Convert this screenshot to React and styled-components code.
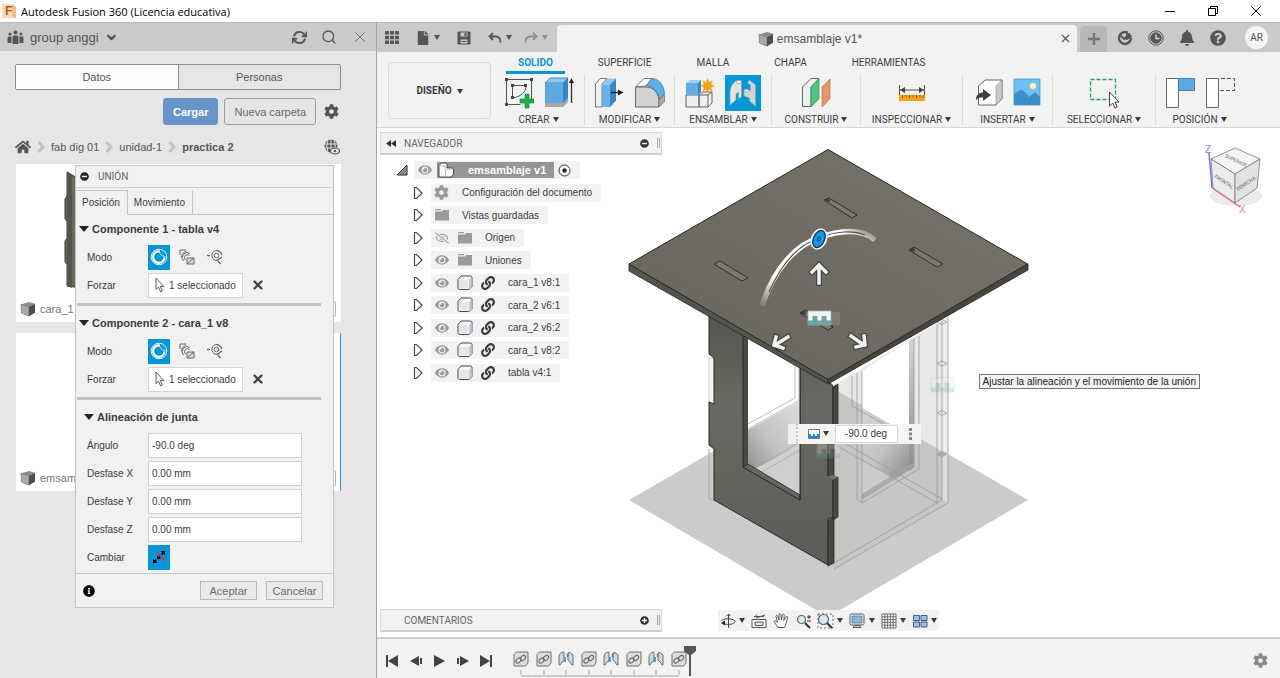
import React from "react";
import styled, { createGlobalStyle } from "styled-components";
import {
  FaFile,
  FaBell,
  FaQuestionCircle,
  FaCog,
  FaHome,
  FaEye,
  FaRegEyeSlash,
  FaLink,
  FaInfoCircle,
  FaMinusCircle,
  FaPlusCircle,
} from "react-icons/fa";
import { FiRefreshCw, FiSearch, FiX, FiChevronDown } from "react-icons/fi";

const GlobalStyle = createGlobalStyle`
  * {
    box-sizing: border-box;
  }
  body {
    margin: 0;
    font-family: "Liberation Sans", Arial, sans-serif;
    font-size: 10px;
    color: #3c3c3c;
    background: #fff;
  }
  button, input {
    font: inherit;
    color: inherit;
    margin: 0;
    padding: 0;
    border: 0;
    background: none;
  }
  svg {
    display: block;
    flex-shrink: 0;
  }
`;

/* ---------- small drawings ---------- */

const Cube = ({ size = 16 }) => (
  <svg width={size} height={size} viewBox="0 0 16 16">
    <path d="M1 3.5 9 1l6 1.8-6 3z" fill="#8b8b8b" />
    <path d="M1 3.5l8 2.3v9.4L1.5 12z" fill="#a9a9a9" stroke="#666" strokeWidth=".6" />
    <path d="M9 5.8l6-3v9L9 15.2z" fill="#4e4e4e" />
  </svg>
);

const Body = () => (
  <svg width="16" height="16" viewBox="0 0 16 16">
    <path
      d="M1 4.5 4 1h9.5L15 2v9.5l-3 3H2.5L1 13.5z"
      fill="#f6f7fa"
      stroke="#4c4c4c"
      strokeLinejoin="round"
    />
    <path d="M2 5h9.5v8.5H2z" fill="#e4e6ec" />
    <path d="M12 5l2.5-3v9.5L12 14z" fill="#c6c9d2" />
  </svg>
);

const Assembly = () => (
  <svg width="16" height="16" viewBox="0 0 16 16">
    <path d="M1 3.5 3.5 1H8l1 1.5V6h5.5l1 1v5l-2.5 3H2l-1-1z" fill="#fff" stroke="#4c4c4c" />
    <path d="M7.5 9 9 7h5M7.5 9v5.5M2 4h5v4" fill="none" stroke="#b9bcc6" />
  </svg>
);

const Folder = () => (
  <svg width="16" height="14" viewBox="0 0 16 14">
    <path d="M1 1h6v1.3H1zM1 3.5h7L9 2h6v10.5H1z" fill="#9b9b9b" />
  </svg>
);

const Expand = () => (
  <svg width="10" height="14" viewBox="0 0 10 14">
    <path d="M1.5 1.5h2L9 7l-5.5 5.5h-2z" fill="#fff" stroke="#4a4a4a" strokeWidth="1.2" />
  </svg>
);

const Expanded = () => (
  <svg width="12" height="12" viewBox="0 0 12 12">
    <path d="M1 11 11 1v10z" fill="#8b8b8b" stroke="#2f2f2f" />
  </svg>
);

const Cursor = () => (
  <svg width="10" height="16" viewBox="0 0 10 16">
    <path
      d="M1 1v11.5l2.6-2.3 2 4.6 1.8-.8-2-4.4H9z"
      fill="#f4f8ff"
      stroke="#4b5058"
      strokeWidth=".9"
    />
  </svg>
);

const RingIcon = () => (
  <svg width="18" height="18" viewBox="0 0 18 18" fill="none" stroke="#fff">
    <circle cx="9" cy="9" r="7.8" strokeWidth=".9" />
    <path d="M9.5 3.5A5.7 5.7 0 1 0 14.5 9.5" strokeWidth="2.2" />
    <path d="M9.5 2.5c0 3.500 2 5.500 6 6" strokeWidth=".8" />
  </svg>
);

const BetweenIcon = () => (
  <svg width="16" height="16" viewBox="0 0 16 16" fill="none" stroke="#666">
    <path d="M1 6V1h6" />
    <path d="M11 4.5a5 5 0 0 0-6.5 7.5M10.5 6.5A3 3 0 0 0 6.5 11M7 2.5a6 6 0 0 0-4.5 6" />
    <path d="M8 9h7v6H8z" fill="#ddd" />
    <path d="M8.5 14.5 15 9" />
  </svg>
);

const OriginIcon = () => (
  <svg width="18" height="16" viewBox="0 0 18 16" fill="none" stroke="#666">
    <path d="M1 6.5h3" strokeWidth="1.4" />
    <path d="M15.8 5.5A5 5 0 1 0 12 11.3M10 1.5c3 .2 5 2 5.5 4.5" />
    <circle cx="10.5" cy="6.5" r="2.3" />
    <path d="M11 11.5 16 8M12 12l2.5 3" strokeWidth="1.3" />
  </svg>
);

const FlipIcon = () => (
  <svg width="14" height="14" viewBox="0 0 14 14">
    <path
      d="M1 13V8.5l1.700 1.700L4 9l1 1-1.200 1.300L5.500 13zM13 1v4.500l-1.700-1.700L10 5 9 4l1.200-1.300L8.500 1zM5 5.500v3.500h4L7.800 7.800 9 6.500 8 5.500 6.500 6.800z"
      fill="#000"
    />
    <path d="M4 1.5 13 11" stroke="#f01f3a" strokeWidth="1.300" />
  </svg>
);

const Team = () => (
  <svg width="17" height="15" viewBox="0 0 17 15" fill="currentColor">
    <circle cx="8.5" cy="2.5" r="2" />
    <circle cx="3" cy="4" r="1.600" />
    <circle cx="14" cy="4" r="1.600" />
    <path d="M6.500 5.500h4l1 1V14h-6V6.500zM1.500 6.500h3V13h-4V7.500zM12.500 6.500h3l1 1V13h-4z" />
  </svg>
);

const Save = () => (
  <svg width="14" height="14" viewBox="0 0 14 14">
    <path d="M.5 1.5 1.5.5h11l1 1v11l-1 1h-11l-1-1z" fill="currentColor" />
    <path d="M3.5 1.5h7v4h-7zM3.5 8.5h7v4h-7z" fill="#cacaca" />
    <path d="M7.5 2h2v3h-2zM4.5 10h5v1h-5z" fill="currentColor" />
  </svg>
);

const SharedGlobe = () => (
  <svg width="16" height="16" viewBox="0 0 16 16" fill="none">
    <circle cx="7" cy="7" r="6.5" fill="#555" />
    <path
      d="M0 5h14M0 9h14M7 0v14M4 1.5c-1.5 4-1.5 7 0 11M10 1.5c1.5 4 1.5 7 0 11"
      stroke="#e6e6e6"
    />
    <ellipse cx="11" cy="12" rx="4.5" ry="3" fill="#e6e6e6" stroke="#555" strokeWidth="1.2" />
    <circle cx="11" cy="12" r="1.3" fill="#555" />
  </svg>
);

const Undo = ({ flip }) => (
  <svg width="14" height="14" viewBox="0 0 14 14" fill="none" stroke="currentColor" strokeWidth="1.8">
    <g transform={flip ? "matrix(-1 0 0 1 14 0)" : undefined}>
      <path d="M5 2 1.5 5.5 5 9" />
      <path d="M2 5.5h5.5c3.5 0 5 2.5 5 6" />
    </g>
  </svg>
);

const Apps = () => (
  <svg width="14" height="13" viewBox="0 0 14 13" fill="currentColor">
    <path d="M0 0h4v3.500H0zM5 0h4v3.500H5zM10 0h4v3.500h-4zM0 4.800h4v3.500H0zM5 4.800h4v3.500H5zM10 4.800h4v3.500h-4zM0 9.500h4V13H0zM5 9.500h4V13H5zM10 9.500h4V13h-4z" />
  </svg>
);

const JobStatus = () => (
  <svg width="16" height="16" viewBox="0 0 16 16" fill="none" stroke="currentColor">
    <path d="M10.5 2.5A6 6 0 1 0 14 8" strokeWidth="2.4" />
    <path d="M3.5 5.5 7 9l6-5.5M10 1.5V5l4.5 1.5" strokeWidth="1.8" />
    <path d="M7 9l5-6 3 4-5 3z" fill="currentColor" stroke="none" />
  </svg>
);

const Clock = () => (
  <svg width="16" height="16" viewBox="0 0 16 16" fill="none" stroke="currentColor">
    <circle cx="8" cy="8" r="7.2" />
    <circle cx="8" cy="8" r="5.2" fill="currentColor" />
    <path d="M8 4.5v4h3.5" stroke="#d8d8d8" strokeWidth="1.4" />
  </svg>
);

const SketchIcon = () => (
  <svg width="30" height="32" viewBox="0 0 30 32" fill="none">
    <path d="M2.5 2.5h25v20M2.5 2.5v25h14" stroke="#555" />
    <path d="M8.5 8.5H22c0 6-4 11-13.5 12.5z" stroke="#555" />
    <path
      d="M1 1h3v3H1zM26 1h3v3h-3zM1 26h3v3H1zM7 7h3v3H7zM20 7h3v3h-3zM7 19h3v3H7z"
      fill="#444"
    />
    <path d="M21 17h4v5h5v4h-5v5h-4v-5h-5v-4h5z" fill="#20b04b" stroke="#12843a" strokeWidth=".6" />
  </svg>
);

const ExtrudeIcon = () => (
  <svg width="30" height="32" viewBox="0 0 30 32">
    <path d="M1 25h18l5-5v5l-5 5H1z" fill="#a7a7a7" />
    <path d="M1 6 6 1h18l-5 5z" fill="#8cc8f2" stroke="#2f78b0" strokeWidth=".8" />
    <path d="M1 6h18v20H1z" fill="#5fa9e2" />
    <path d="M19 6l5-5v20l-5 5z" fill="#3985c2" />
    <path d="M27.5 26V4" stroke="#333" strokeWidth="1.3" />
    <path d="M25 6l2.5-5L30 6z" fill="#222" />
  </svg>
);

const PressPullIcon = () => (
  <svg width="30" height="32" viewBox="0 0 30 32">
    <path d="M1.5 7 6 1.5h7L8 7v23H1.5z" fill="#f2f2f2" stroke="#777" />
    <path d="M8 8l6-6.500h8L17 8z" fill="#8cc8f2" />
    <path d="M8 8h8.5v22H8z" fill="#68b0e6" />
    <path d="M16 8l6-6.500v22L16 30z" fill="#3a86c4" />
    <path d="M17 15.5h8" stroke="#222" strokeWidth="1.5" />
    <path d="M24 12.5l5.5 3-5.5 3z" fill="#222" />
  </svg>
);

const FilletIcon = () => (
  <svg width="32" height="32" viewBox="0 0 32 32">
    <path d="M1.5 10 10 1.5h8L12 9z" fill="#fff" stroke="#777" />
    <path d="M1.5 10H12c7 0 12 5 13 13v7H1.5z" fill="#d2d2d2" stroke="#666" />
    <path
      d="M12 9l6-7.500C25 2 30 8 30.500 17L25 22c-.5-7-5-12.500-13-13z"
      fill="#5fb0e8"
      stroke="#33719e"
      strokeWidth=".7"
    />
    <path d="M25 23l5.5-5.500v7L25 30z" fill="#a9a9a9" stroke="#666" strokeWidth=".7" />
  </svg>
);

const NewComponentIcon = () => (
  <svg width="30" height="32" viewBox="0 0 30 32">
    <path d="M1 18h13v12H1zM14 18l4-3h9v11l-4 4h-9z" fill="#eee" stroke="#666" />
    <path d="M14 18h9v12M23 18l4-3" fill="none" stroke="#666" />
    <path d="M1 6l4-3h11l-3 3z" fill="#9ad0f5" />
    <path d="M1 6h12v12H1z" fill="#62ace4" />
    <path d="M13 6l3-3v12l-3 3z" fill="#3985c2" />
    <path
      d="M22.5 1l1.5 4.200 4-1.900-1.900 4L30 9l-3.900 1.500 1.900 4-4-1.900-1.500 4.400-1.500-4.400-4 1.900 1.900-4L15 9l3.900-1.700-1.900-4 4 1.900z"
      fill="#f6a212"
    />
  </svg>
);

const JointIcon = () => (
  <svg width="28" height="28" viewBox="0 0 28 28">
    <path d="M1 12C2 6 5 3 8 1.500h4.500V18l-3 1.500V13L7 15v6l-6 5z" fill="#e4e4e4" stroke="#8aa" strokeWidth=".7" />
    <ellipse cx="10" cy="3" rx="2.700" ry="1.700" fill="#fff" stroke="#888" strokeWidth=".6" />
    <path d="M15 11h4.500v1l2-1V6l-3-2 2-3 6 5v21l-6-5v-3l-5.500-2z" fill="#d3d3d3" stroke="#8aa" strokeWidth=".7" />
    <ellipse cx="17.500" cy="11.500" rx="2.500" ry="1.500" fill="#fff" stroke="#888" strokeWidth=".6" />
  </svg>
);

const PlaneIcon = () => (
  <svg width="30" height="32" viewBox="0 0 30 32">
    <path d="M1.5 10 10 1.5h8L10 10v19.500H1.5z" fill="#eee" stroke="#666" />
    <path d="M10 10l8-8v20l-8 8z" fill="#50c281" stroke="#23894f" strokeWidth=".6" />
    <path d="M21 10l8-8v20l-8 8z" fill="#e5966a" stroke="#b9683a" strokeWidth=".6" />
  </svg>
);

const MeasureIcon = () => (
  <svg width="28" height="32" viewBox="0 0 28 32">
    <path d="M1.5 8v11M26.5 8v11M2 13h24" stroke="#555" />
    <path d="M2 13l5-3v6zM26 13l-5-3v6z" fill="#444" />
    <path d="M1 18h26v6H1z" fill="#f5a30f" />
    <path d="M4.5 18v3M8 18v2M11.5 18v3M15 18v2M18.5 18v3M22 18v2M25 18v3" stroke="#8a5600" />
  </svg>
);

const InsertIcon = () => (
  <svg width="28" height="32" viewBox="0 0 28 32">
    <path d="M3.5 9 10 3h17v19l-6 6H3.5z" fill="#fff" stroke="#666" />
    <path d="M21 9l6-6v19l-6 6z" fill="#c9c9c9" stroke="#888" strokeWidth=".6" />
    <path d="M1 23c0-5 3-7.500 7-7.500V12l8 6-8 6v-3.500c-3 0-5 .5-7 2.500z" fill="#3d3f42" />
  </svg>
);

const CanvasIcon = () => (
  <svg width="28" height="32" viewBox="0 0 28 32">
    <path d="M1 2h26v26H1z" fill="#6fc1f5" />
    <path d="M1 17l6-4c2-1 4 1 9 7l5-4c1-.5 2 0 6 4v8H1z" fill="#3a8fc9" />
    <circle cx="20" cy="9" r="3" fill="#fff6cf" stroke="#f1e08a" />
    <path d="M1 2h26v26H1z" fill="none" stroke="#3a8fc9" strokeWidth=".7" />
  </svg>
);

const SelectIcon = () => (
  <svg width="30" height="32" viewBox="0 0 30 32">
    <path d="M1.5 2.5h25v20h-25z" fill="none" stroke="#20a551" strokeWidth="1.3" strokeDasharray="4 2" />
    <path d="M20.5 15v14l3.200-3 2.300 5 2.200-1-2.300-5h4z" fill="#fff" stroke="#444" />
  </svg>
);

const PositionIcon = ({ filled }) => (
  <svg width="30" height="32" viewBox="0 0 30 32">
    <path d="M1.5 1.5h12v29h-12z" fill="#fff" stroke="#666" />
    {filled ? (
      <path d="M13.5 1.5h16v12h-16z" fill="#5fa9e2" stroke="#33719e" strokeWidth=".8" />
    ) : (
      <path d="M16 1.5h13.5v12H14" fill="none" stroke="#555" strokeDasharray="4 2" />
    )}
  </svg>
);

const Orbit = () => (
  <svg width="16" height="16" viewBox="0 0 16 16" fill="none" stroke="#444">
    <path d="M8.5 1v14M6.5 3l2-2 2 2" />
    <path d="M3.500 10.500C8 12.500 15 11 15 8.500S6 4.500 1.500 7.500" />
    <path d="M1 10l4-2.500v5z" fill="#222" stroke="none" />
  </svg>
);

const LookAt = () => (
  <svg width="16" height="16" viewBox="0 0 16 16" fill="none" stroke="#4b5560">
    <path d="M1 6.5h14v8H1z" fill="#fff" />
    <path d="M4 9h8v3.5H4z" fill="#dfe6ee" />
    <path d="M3 4.5l3-3M5 5l9-3M3 3.5h10" />
  </svg>
);

const Pan = () => (
  <svg width="16" height="16" viewBox="0 0 16 16">
    <path
      d="M5 14.500C3.500 12 1.500 9.500 1 8.500c0-1 1.500-1 3.500 1L3 3.500c0-1.500 1.300-1.500 1.800 0L6 7 6 2c0-1.500 1.800-1.500 1.900 0L8.300 7 9.500 2c.3-1.300 2-1 1.800.5L10.700 7.500 13 4c.8-1.200 2-.5 1.600.8C13 9 13 12 11.500 14.500z"
      fill="#fff"
      stroke="#4b4b4b"
      strokeWidth=".9"
    />
  </svg>
);

const Zoom = ({ box }) => (
  <svg width="17" height="16" viewBox="0 0 17 16" fill="none">
    {box && <path d="M1 1h15v14H1z" stroke="#777" strokeDasharray="2 2" />}
    <circle cx="6.5" cy="6.5" r={box ? 5 : 4} fill="#d8ecf2" stroke="#5d6a73" strokeWidth="1.2" />
    <path d="M10 10l5 5" stroke="#333" strokeWidth="2" />
    {!box && <path d="M12 4h4M14 2v4M12 8h4" stroke="#333" />}
  </svg>
);

const Display = () => (
  <svg width="17" height="16" viewBox="0 0 17 16">
    <rect x="1" y="1" width="14" height="11" rx="1.5" fill="#f1f1f1" stroke="#4d5966" />
    <path d="M3 3h10v7H3z" fill="#8fb4dc" stroke="#4d6a8b" strokeWidth=".7" />
    <path d="M4 14.500h8l-1.500-2h-5z" fill="#ddd" stroke="#4d5966" />
  </svg>
);

const GridIcon = () => (
  <svg width="16" height="16" viewBox="0 0 16 16">
    <path
      d="M1 1h14v14H1zM3.800 1v14M6.600 1v14M9.400 1v14M12.200 1v14M1 3.800h14M1 6.600h14M1 9.400h14M1 12.200h14"
      fill="#fff"
      stroke="#6d6d6d"
    />
  </svg>
);

const Viewports = () => (
  <svg width="16" height="16" viewBox="0 0 16 16">
    <path
      d="M1.5 2.5h6v5h-6zM9 2.5h6v5H9zM1.5 9h6v5h-6zM9 9h6v5H9z"
      fill="#9dbfe3"
      stroke="#42618a"
    />
  </svg>
);

const LinkStep = () => (
  <svg width="16" height="16" viewBox="0 0 16 16">
    <path d="M1 3.5 3.5 1H15v11l-2.5 3H1z" fill="#dedede" stroke="#6f6f6f" />
    <g fill="none" stroke="#666">
      <ellipse cx="5.500" cy="9.500" rx="3" ry="2" transform="rotate(-40 5.500 9.500)" />
      <ellipse cx="10" cy="7" rx="3" ry="2" transform="rotate(-40 10 7)" />
    </g>
  </svg>
);

const JointStep = () => (
  <svg width="16" height="16" viewBox="0 0 16 16">
    <path d="M1 6C1 3 3 1 6 1v9l-2 1-2 3H1z" fill="#d6d6d6" stroke="#6f6f6f" />
    <path d="M15 14V4l-4-3-1 3v5l2 2 2 3z" fill="#d6d6d6" stroke="#6f6f6f" />
    <path d="M7 11V6M9.500 6V2.500" stroke="#1c87c9" strokeWidth="1.4" fill="none" />
  </svg>
);

const Caret = styled.span`
  display: inline-block;
  border: 3px solid transparent;
  border-top: 5px solid currentColor;
  border-bottom: 0;
`;

/* ---------- window frame ---------- */

const Shell = styled.div`
  display: flex;
  flex-direction: column;
  height: 100vh;
  overflow: hidden;
`;

const TitleBar = styled.header`
  display: flex;
  align-items: center;
  height: 22px;
  padding: 0 18px 0 2px;
  color: #000;
  font-family: "Open Sans", sans-serif;
  font-size: 11px;
`;

const AppTitle = styled.span`
  flex: 1;
  margin-left: 5px;
`;

const WindowButtons = styled.div`
  display: flex;
  gap: 31px;
`;

const Main = styled.div`
  display: flex;
  flex: 1;
  min-height: 0;
`;

/* ---------- data panel ---------- */

const Panel = styled.aside`
  position: relative;
  flex: 0 0 377px;
  background: #e6e6e6;
  border-right: 1px solid #a5a5a5;
  color: #555;
  font-size: 11px;
`;

const PanelHead = styled.div`
  display: flex;
  align-items: center;
  height: 29px;
  padding: 0 7px;
  background: #cacaca;
  border-top: 1px solid #bdbdbd;
`;

const TeamButton = styled.button`
  display: flex;
  align-items: center;
  gap: 6px;
  flex: 1;
  font-size: 13px;
`;

const HeadActions = styled.div`
  display: flex;
  gap: 14px;
`;

const PanelBody = styled.div`
  padding: 13px 35px 0 15px;
`;

const Segments = styled.div`
  display: flex;
  height: 26px;
  border: 1px solid #8d8d8d;
  border-radius: 2px;
`;

const Segment = styled.button`
  flex: 1;
  background: ${(p) => (p.$active ? "#fcfcfc" : "transparent")};

  & + & {
    border-left: 1px solid #8d8d8d;
  }
`;

const Actions = styled.div`
  display: flex;
  align-items: center;
  justify-content: flex-end;
  gap: 6px;
  margin-top: 8px;

  svg {
    margin: 0 2px;
  }
`;

const ActionButton = styled.button`
  height: 27px;
  padding: 0 9px;
  border: 1px solid ${(p) => (p.$primary ? "#6795c9" : "#9b9b9b")};
  border-radius: 3px;
  background: ${(p) => (p.$primary ? "#6795c9" : "transparent")};
  color: ${(p) => (p.$primary ? "#fff" : "#666")};
  font-weight: ${(p) => (p.$primary ? "bold" : "normal")};
`;

const Crumbs = styled.nav`
  display: flex;
  align-items: center;
  gap: 6px;
  height: 20px;
  margin: 12px 1px 7px 0;

  a {
    color: inherit;
    text-decoration: none;
  }
  a[aria-current] {
    font-weight: bold;
    flex: 1;
  }
`;

const CrumbArrow = () => (
  <svg width="8" height="12" viewBox="0 0 8 12">
    <path d="M1.5 1l4.5 5-4.5 5" fill="none" stroke="#c2c2c2" strokeWidth="3" />
  </svg>
);

const Card = styled.article`
  display: flex;
  flex-direction: column;
  justify-content: space-between;
  height: 158px;
  margin: 0 0 11px 1px;
  background: #fff;
  border-right: 1px solid ${(p) => (p.$selected ? "#3f87d8" : "#fff")};
`;

const Thumb = styled.div`
  height: 130px;
  padding: 7px 0 0 48px;
`;

const CardFooter = styled.div`
  display: flex;
  align-items: center;
  gap: 4px;
  height: 27px;
  padding: 0 4px;
  color: #777;

  button {
    margin-left: auto;
    width: 14px;
    height: 16px;
    border: 1px solid #b5b5b5;
    border-radius: 2px;
  }
`;

/* ---------- joint dialog ---------- */

const Dialog = styled.section`
  position: absolute;
  top: 143px;
  left: 75px;
  width: 259px;
  border: 1px solid #c4c4c4;
  background: #f1f1f1;
  color: #3c3c3c;
  font-size: 10px;
`;

const DialogHead = styled.div`
  display: flex;
  align-items: center;
  gap: 9px;
  height: 22px;
  padding-left: 4px;
  border-bottom: 1px solid #d0d0d0;
  font-family: Roboto, sans-serif;
  color: #666;

  svg {
    color: #222;
  }
`;

const DialogTabs = styled.div`
  display: flex;
  height: 27px;
  padding-top: 2px;
  border-bottom: 1px solid #c2c2c2;
`;

const DialogTab = styled.button`
  height: ${(p) => (p.$active ? "25px" : "24px")};
  padding: 0 7px 1px 6px;
  border: 1px solid ${(p) => (p.$active ? "#c2c2c2" : "transparent")};
  border-right-color: #c2c2c2;
  border-bottom: 0;
  border-left: 0;
  background: #f1f1f1;
`;

const Group = styled.div`
  padding-left: 3px;
`;

const GroupTitle = styled.button`
  display: flex;
  align-items: center;
  gap: 3px;
  height: 28px;
  padding-left: ${(p) => (p.$indent ? "5px" : "0")};
  font-size: 11px;
  font-weight: bold;
`;

const TitleCaret = styled.span`
  border: 5px solid transparent;
  border-top: 6px solid #222;
  border-bottom: 0;
`;

const Field = styled.div`
  display: grid;
  grid-template-columns: 61px 1fr;
  align-items: center;
  height: 28px;
  margin-left: 8px;
`;

const FieldControl = styled.div`
  display: flex;
  align-items: center;
  gap: 6px;
`;

const ToolToggle = styled.button`
  display: flex;
  align-items: center;
  justify-content: center;
  width: 22px;
  height: 25px;
  background: ${(p) => (p.$active ? "#0696d7" : "transparent")};
`;

const Picked = styled.button`
  display: flex;
  align-items: center;
  gap: 4px;
  width: 95px;
  height: 25px;
  padding-left: 6px;
  border: 1px solid #d6d6d6;
  background: #fff;
  white-space: nowrap;
`;

const ClearButton = styled.button`
  margin-left: 2px;
  color: #444;

  svg {
    stroke-width: 4;
  }
`;

const NumberInput = styled.input`
  width: 154px;
  height: 25px;
  padding: 0 3px;
  border: 1px solid #cfcfcf;
  background: #fff;
`;

const Divider = styled.hr`
  height: 3px;
  margin: 4px 12px 3px 1px;
  border: 0;
  background: #c3c3c3;
`;

const DialogFooter = styled.div`
  display: flex;
  align-items: center;
  gap: 9px;
  height: 34px;
  margin-top: 2px;
  padding: 0 10px 0 7px;
  border-top: 1px solid #c8c8c8;

  svg {
    margin-right: auto;
    color: #000;
  }
`;

const DialogButton = styled.button`
  height: 19px;
  padding: 0 4px;
  min-width: 57px;
  border: 1px solid #b9b9b9;
  background: #e9e9e9;
  color: #6b6b6b;
  font-size: 11px;
`;

/* ---------- workspace ---------- */

const Workspace = styled.main`
  display: flex;
  flex-direction: column;
  flex: 1;
  min-width: 0;
`;

const TabStrip = styled.div`
  display: flex;
  align-items: flex-end;
  height: 30px;
  background: #cacaca;
  border-top: 1px solid #bdbdbd;
  color: #555;
`;

const QuickBar = styled.div`
  display: flex;
  align-items: center;
  align-self: stretch;
  width: 180px;
  padding-left: 8px;
`;

const QuickButton = styled.button`
  display: flex;
  align-items: center;
  gap: 4px;
  margin-right: ${(p) => p.$gap}px;
  opacity: ${(p) => (p.disabled ? 0.5 : 1)};
`;

const DocTab = styled.div`
  display: flex;
  align-items: center;
  justify-content: center;
  flex: 1;
  height: 27px;
  padding-right: 5px;
  border-radius: 4px 4px 0 0;
  background: #f2f2f2;
  font-size: 12px;

  span {
    margin-left: auto;
    padding-left: 4px;
    display: flex;
    align-items: center;
    gap: 3px;
  }
  button {
    margin-left: auto;
  }
`;

const NewTab = styled.button`
  display: flex;
  align-items: center;
  justify-content: center;
  width: 27px;
  height: 26px;
  margin: 0 10px 0 3px;
  border-radius: 4px 4px 0 0;
  background: #b8b8b8;
  color: #777;
`;

const StripIcons = styled.div`
  display: flex;
  align-items: center;
  align-self: stretch;
  gap: 15px;
  padding-right: 12px;
`;

const Avatar = styled.button`
  width: 23px;
  height: 23px;
  margin-left: 4px;
  border-radius: 50%;
  background: #f4f4f4;
  font-family: Roboto, sans-serif;
`;

const Ribbon = styled.div`
  display: flex;
  height: 76px;
  padding-left: 11px;
  background: #f2f2f2;
  border-bottom: 1px solid #d9d9d9;
  color: #3c3c3c;
  font-family: Roboto, sans-serif;
`;

const WorkspaceButton = styled.button`
  width: 103px;
  height: 57px;
  margin: 10px 2px 0 0;
  border: 1px solid #dadada;
  border-radius: 4px;
  font-weight: bold;

  ${Caret} {
    margin-left: 5px;
    vertical-align: middle;
  }
`;

const RibbonTabs = styled.div`
  display: flex;
  gap: 21px;
  height: 22px;
  padding-left: 13px;
`;

const RibbonTab = styled.button`
  padding: 2px 12px 0;
  border-bottom: 3px solid ${(p) => (p.$active ? "#0696d7" : "transparent")};
  color: ${(p) => (p.$active ? "#0696d7" : "inherit")};
  font-weight: ${(p) => (p.$active ? "bold" : "normal")};
`;

const ToolGroups = styled.div`
  display: flex;
  padding-top: 1px;
`;

const ToolGroup = styled.div`
  display: flex;
  flex-direction: column;
  align-items: center;
  width: ${(p) => p.$width}px;
  height: 50px;
  border-right: 1px solid #dcdcdc;

  &:last-child {
    border-right-color: transparent;
  }
`;

const Tools = styled.div`
  display: flex;
  align-items: center;
  flex-shrink: 0;
  gap: 10px;
  height: 35px;

  button {
    display: flex;
  }
`;

const ActiveTool = styled.button`
  align-items: center;
  justify-content: center;
  width: 36px;
  height: 36px;
  background: #0696d7;
`;

const GroupLabel = styled.button`
  flex-shrink: 0;
  height: 18px;
  white-space: nowrap;

  ${Caret} {
    margin-left: 3px;
    vertical-align: middle;
  }
`;

const Canvas = styled.div`
  position: relative;
  display: flex;
  flex-direction: column;
  justify-content: space-between;
  flex: 1;
  min-height: 0;
  padding: 4px 3px 5px;
  background: #fff;
`;

const Scene = styled.svg`
  position: absolute;
  inset: 0;
  margin: auto;
`;

const Browser = styled.div`
  position: relative;
  width: 282px;
`;

const Bar = styled.div`
  display: flex;
  align-items: center;
  gap: 8px;
  width: 282px;
  height: 23px;
  padding: 0 1px 0 5px;
  border: 1px solid #d8d8d8;
  border-bottom: 2px solid #d0d0d0;
  background: #f2f2f2;
  color: #666;
  font-family: Roboto, sans-serif;

  span {
    flex: 1;
  }
  svg {
    color: #333;
  }
`;

const Grip = styled.i`
  width: 3px;
  height: 10px;
  border: 1px solid #aaa;
  border-width: 0 1px;
`;

const Tree = styled.ul`
  display: grid;
  grid-template-rows: repeat(10, 1fr);
  align-items: center;
  height: 225px;
  margin: 4px 0 0;
  padding: 0;
  list-style: none;
`;

const TreeRow = styled.li`
  display: flex;
  align-items: center;
  gap: ${(p) => (p.$root ? "6px" : "8px")};
  padding-left: ${(p) => (p.$root ? "16px" : "33px")};
`;

const TreeCell = styled.div`
  display: flex;
  align-items: center;
  height: 18px;
  padding-right: 9px;
  background: #f2f2f2;
  color: #3c3c3c;
  white-space: nowrap;
`;

const Slot = styled.span`
  display: flex;
  align-items: center;
  justify-content: center;
  width: 23px;
  padding-right: 2px;
  color: ${(p) => (p.$dark ? "#3a3a3a" : "#999")};
`;

const NodeName = styled.span`
  margin-left: 8px;
`;

const RootName = styled.span`
  display: flex;
  align-items: center;
  gap: 14px;
  height: 16px;
  margin-right: 4px;
  padding: 0 8px 0 1px;
  background: #969696;
  color: #fff;
  font-size: 11px;
  font-weight: bold;
`;

const BottomRow = styled.div`
  position: relative;
  display: grid;
  grid-template-columns: 1fr auto 1fr;
  align-items: center;
`;

const NavBar = styled.div`
  display: flex;
  align-items: center;
  justify-content: space-between;
  width: 221px;
  height: 21px;
  padding: 0 2px;
  background: #f2f2f2;

  button {
    display: flex;
    align-items: center;
    gap: 3px;
  }
`;

const MiniToolbar = styled.div`
  position: absolute;
  top: calc(50% + 41px);
  left: calc(50% - 41px);
  display: flex;
  align-items: center;
  width: 133px;
  height: 20px;
  padding-right: 9px;
  background: #f4f4f4;

  button {
    display: flex;
    align-items: center;
    gap: 3px;
    margin-left: auto;
  }
  input {
    width: 63px;
    height: 18px;
    margin: 0 11px 0 6px;
    border: 1px solid #d5d5d5;
    background: #fff;
    text-align: center;
  }
`;

const DotGrip = styled.i`
  width: 10px;
  height: 20px;
  border-right: 2px dotted #ccc;
  background: #f0f0f0;
`;

const Tooltip = styled.div`
  position: absolute;
  top: calc(50% - 9px);
  left: calc(50% + 150px);
  height: 15px;
  padding: 0 3px;
  border: 1px solid #767676;
  background: #f4f4f4;
  color: #222;
  line-height: 13px;
  white-space: nowrap;
`;

const ViewCube = styled.svg`
  position: absolute;
  top: 14px;
  right: 10px;
`;

const Timeline = styled.footer`
  display: flex;
  align-items: center;
  height: 41px;
  padding: 4px 12px 0 7px;
  background: #f2f2f2;
  border-top: 2px solid #d0d0d0;
  color: #444;
`;

const Playback = styled.div`
  display: flex;
  justify-content: space-between;
  width: 110px;
  margin-right: 16px;
`;

const Steps = styled.div`
  display: grid;
  grid-template-columns: repeat(8, 1fr);
  width: 180px;
`;

const Step = styled.button`
  display: flex;
  flex-direction: column;
  align-items: center;
  gap: 3px;
  padding-top: 6px;
`;

const StepTick = styled.i`
  align-self: stretch;
  height: 7px;
  background: linear-gradient(#c9c9c9, #c9c9c9) center top / 2px 5px no-repeat,
    linear-gradient(#c9c9c9, #c9c9c9)
      ${(p) => (p.$edge === "first" ? "right" : "left")} 5px /
      ${(p) => (p.$edge ? "50%" : "100%")} 2px no-repeat;
`;

const Marker = styled.svg`
  margin-left: -6px;
`;

const Settings = styled.button`
  margin-left: auto;
  color: #8a8a8a;
`;

/* ---------- data ---------- */

const RIBBON = [
  { label: "CREAR", width: 92, icons: [SketchIcon, ExtrudeIcon] },
  { label: "MODIFICAR", width: 90, icons: [PressPullIcon, FilletIcon] },
  { label: "ENSAMBLAR", width: 97, icons: [NewComponentIcon], active: true },
  { label: "CONSTRUIR", width: 89, icons: [PlaneIcon] },
  { label: "INSPECCIONAR", width: 102, icons: [MeasureIcon] },
  { label: "INSERTAR", width: 90, icons: [InsertIcon, CanvasIcon] },
  { label: "SELECCIONAR", width: 103, icons: [SelectIcon] },
  {
    label: "POSICIÓN",
    width: 88,
    icons: [() => <PositionIcon filled />, PositionIcon],
  },
];

const NODES = [
  { name: "Configuración del documento", icons: ["gear"] },
  { name: "Vistas guardadas", icons: ["folder"] },
  { name: "Origen", icons: ["hidden", "folder"] },
  { name: "Uniones", icons: ["eye", "folder"] },
  { name: "cara_1 v8:1", icons: ["eye", "body", "link"] },
  { name: "cara_2 v6:1", icons: ["eye", "body", "link"] },
  { name: "cara_2 v6:2", icons: ["eye", "body", "link"] },
  { name: "cara_1 v8:2", icons: ["eye", "body", "link"] },
  { name: "tabla v4:1", icons: ["eye", "body", "link"] },
];

const NODE_ICONS = {
  gear: <FaCog size={15} />,
  folder: <Folder />,
  hidden: <FaRegEyeSlash size={14} />,
  eye: <FaEye size={14} />,
  body: <Body />,
  link: <FaLink size={14} />,
};

const STEPS = ["link", "link", "joint", "link", "joint", "link", "joint", "link"];

const PLAYBACK = [
  ["Inicio", "M2 2h2v12H2zM14 2v12L4 8z"],
  ["Atrás", "M11 3v10L2 8zM12 5h2v6h-2z"],
  ["Reproducir", "M3 2l11 6-11 6z"],
  ["Adelante", "M5 3v10l9-5zM2 5h2v6H2z"],
  ["Fin", "M12 2h2v12h-2zM2 2v12l10-6z"],
];

const OFFSETS = [
  { id: "angulo", label: "Ángulo", value: "-90.0 deg" },
  { id: "x", label: "Desfase X", value: "0.00 mm" },
  { id: "y", label: "Desfase Y", value: "0.00 mm" },
  { id: "z", label: "Desfase Z", value: "0.00 mm" },
];

/* ---------- sections ---------- */

const Component = ({ title }) => (
  <Group>
    <GroupTitle>
      <TitleCaret />
      {title}
    </GroupTitle>
    <Field>
      <span>Modo</span>
      <FieldControl>
        <ToolToggle $active aria-label="Simple">
          <RingIcon />
        </ToolToggle>
        <ToolToggle aria-label="Entre dos caras">
          <BetweenIcon />
        </ToolToggle>
        <ToolToggle aria-label="Dos aristas">
          <OriginIcon />
        </ToolToggle>
      </FieldControl>
    </Field>
    <Field>
      <span>Forzar</span>
      <FieldControl>
        <Picked>
          <Cursor />1 seleccionado
        </Picked>
        <ClearButton aria-label="Borrar">
          <FiX size={14} />
        </ClearButton>
      </FieldControl>
    </Field>
  </Group>
);

const JointDialog = () => (
  <Dialog>
    <DialogHead>
      <FaMinusCircle size={9} />
      <span>UNIÓN</span>
    </DialogHead>
    <DialogTabs>
      <DialogTab $active>Posición</DialogTab>
      <DialogTab>Movimiento</DialogTab>
    </DialogTabs>
    <Component title="Componente 1 - tabla v4" />
    <Divider />
    <Component title="Componente 2 - cara_1 v8" />
    <Divider />
    <Group>
      <GroupTitle $indent>
        <TitleCaret />
        Alineación de junta
      </GroupTitle>
      {OFFSETS.map(({ id, label, value }) => (
        <Field key={id}>
          <label htmlFor={id}>{label}</label>
          <NumberInput id={id} defaultValue={value} />
        </Field>
      ))}
      <Field>
        <span>Cambiar</span>
        <ToolToggle $active aria-label="Cambiar">
          <FlipIcon />
        </ToolToggle>
      </Field>
    </Group>
    <DialogFooter>
      <FaInfoCircle size={12} />
      <DialogButton>Aceptar</DialogButton>
      <DialogButton>Cancelar</DialogButton>
    </DialogFooter>
  </Dialog>
);

const DataPanel = () => (
  <Panel>
    <PanelHead>
      <TeamButton>
        <Team />
        group anggi
        <FiChevronDown size={13} strokeWidth={4} />
      </TeamButton>
      <HeadActions>
        <button aria-label="Actualizar">
          <FiRefreshCw size={15} strokeWidth={3} />
        </button>
        <button aria-label="Buscar">
          <FiSearch size={16} />
        </button>
        <button aria-label="Cerrar">
          <FiX size={18} strokeWidth={1} />
        </button>
      </HeadActions>
    </PanelHead>
    <PanelBody>
      <Segments>
        <Segment $active>Datos</Segment>
        <Segment>Personas</Segment>
      </Segments>
      <Actions>
        <ActionButton $primary>Cargar</ActionButton>
        <ActionButton>Nueva carpeta</ActionButton>
        <FaCog size={15} />
      </Actions>
      <Crumbs>
        <FaHome size={16} />
        <CrumbArrow />
        <a href="#fab">fab dig 01</a>
        <CrumbArrow />
        <a href="#unidad">unidad-1</a>
        <CrumbArrow />
        <a href="#practica" aria-current="page">
          practica 2
        </a>
        <SharedGlobe />
      </Crumbs>
      <Card>
        <Thumb>
          <svg width="60" height="122" viewBox="0 0 60 122">
            <path
              d="M3 1l48 28v93L3 115V93l-2-2V70l2-3V50l-2-2V28l2-3z"
              fill="#6a685f"
              stroke="#3a3935"
            />
            <path d="M3 1l5 3v113l-5-2z" fill="#55544d" />
          </svg>
        </Thumb>
        <CardFooter>
          <Cube />
          cara_1
          <button aria-label="Versiones de cara_1" />
        </CardFooter>
      </Card>
      <Card $selected>
        <Thumb />
        <CardFooter>
          <Cube />
          emsam
          <button aria-label="Versiones de emsamblaje" />
        </CardFooter>
      </Card>
    </PanelBody>
    <JointDialog />
  </Panel>
);

const JointGlyph = ({ x, y, opacity = 1 }) => (
  <g transform={`translate(${x} ${y})`} opacity={opacity}>
    <path d="M0 0h23v14H0z" fill="#f1f4f3" stroke="#a9b5b4" strokeWidth=".8" />
    <path d="M0 9.5h4.500V5h5v4.500h4V5h5v4.500H23V14H0z" fill="#6aa5a2" />
  </g>
);

const Model = () => (
  <Scene width="401" height="469" viewBox="628 148 401 469">
    <defs>
      <linearGradient id="plate" x1="0" y1="1" x2="1" y2="0">
        <stop offset="0" stopColor="#69655c" />
        <stop offset="1" stopColor="#76736b" />
      </linearGradient>
      <linearGradient id="front" x1="0" y1="0" x2="0" y2="1">
        <stop offset="0" stopColor="#53534f" />
        <stop offset=".35" stopColor="#696963" />
        <stop offset="1" stopColor="#5d5d57" />
      </linearGradient>
      <linearGradient id="wallLeft" x1="1" y1="0" x2="0" y2="1">
        <stop offset="0" stopColor="#ddd" />
        <stop offset=".6" stopColor="#c2c2c2" />
        <stop offset="1" stopColor="#8f8f8f" />
      </linearGradient>
      <linearGradient id="wallRight" x1="0" y1="0" x2="1" y2="1">
        <stop offset="0" stopColor="#d6d6d6" />
        <stop offset=".5" stopColor="#c2c2c2" />
        <stop offset="1" stopColor="#858585" />
      </linearGradient>
      <linearGradient id="jamb" x1="0" y1="0" x2="0" y2="1">
        <stop offset="0" stopColor="#d4d4d4" />
        <stop offset="1" stopColor="#8b8b8b" />
      </linearGradient>
      <linearGradient id="arc" x1="0" y1="1" x2="1" y2="0">
        <stop offset="0" stopColor="#fff" stopOpacity=".1" />
        <stop offset=".25" stopColor="#fff" />
        <stop offset=".85" stopColor="#fff" />
        <stop offset="1" stopColor="#fff" stopOpacity=".1" />
      </linearGradient>
    </defs>

    {/* ground shadow */}
    <path d="M629 500 828 385l200 115-200 117z" fill="#cbcbcb" />

    {/* translucent wall on the right and what shows through its window */}
    <path d="M834 385l114-68v138l-114-66z" fill="#e8e8e6" />
    <path d="M834 389l114 66v48l-114 66z" fill="#c6c6c5" />
    <path d="M942 321l6-4v186l-6-4z" fill="#f4f4f4" opacity=".5" />
    <path d="M862 371l52-33v100l-52-30z" fill="#fff" />
    <path d="M862 408l52 30v29l-19 12-33-19z" fill="url(#wallRight)" />
    <path d="M862 460l33 19-33 20z" fill="#cbcbcb" />
    <path d="M909 341l5-3v129l-5 4z" fill="url(#jamb)" />
    <path d="M862 494l52-32v5l-52 33z" fill="#a2a2a2" opacity=".8" />
    <g fill="none" stroke="#9a9a9a" strokeWidth=".8">
      <path d="M948 317v186l-114 66M942 321v179l-108 63M937 324v179" />
      <path d="M857 373v126l5 4 57-34V336M862 371v132M914 338v129M852 376v30l48 27" />
      <path d="M834 444l103 59M834 437l108 62" />
      <path d="M937 322l5-2.500 5 2.500-5 2.500zM937 363.500l5-2.500 5 2.500-5 2.500zM937 413l5-2.500 5 2.500-5 2.500z" />
      <path d="M937 454l5-2.500 5 2.500-5 2.500z" fill="#aaa" />
    </g>

    {/* front frame */}
    <path d="M709 358h6v49h-6z" fill="#f4f4f4" stroke="#ccc" />
    <path d="M709 449v49l5 3" fill="none" stroke="#aaa" />
    <path
      d="M709 312l119 68 5 6v58h-5v32l5 3v39h-5v47l-114-65v-51l-5-4v-43l5 2v-46l-5-4z"
      fill="url(#front)"
      stroke="#262624"
    />
    <path
      d="M833 387l5-3v59h-5zM828 444h6v32h-6zM833 480l5-3v40l-5 3zM828 520l6-3v46l-6 3z"
      fill="#4b4842"
      stroke="#262624"
      strokeWidth=".8"
    />
    <path d="M828 476l6-1 4 2-5 3z" fill="#77746c" />
    <path d="M743 332l57 33v135l-57-33z" fill="#4b4840" stroke="#262624" />
    <path d="M748 335l52 30v130l-52-31z" fill="#fff" />
    <path d="M748 430l52-29v45l-45 23-7-5z" fill="url(#wallLeft)" />
    <path d="M800 446v49l-45-26z" fill="#cfcfcf" />
    <path d="M748 424l47-26V362M748 429l52-29M799 363v38" fill="none" stroke="#bbb" />
    <path d="M755 468l45-26M762 472l38-22" stroke="#a5a5a5" strokeWidth=".7" />
    <path d="M743 467l5-3 52 31v5z" fill="#6b665b" stroke="#262624" strokeWidth=".8" />
    <path d="M800 364v136" stroke="#262624" />

    {/* top plate */}
    <path d="M629 264v7l199 113v-5z" fill="#55554f" stroke="#262624" strokeWidth=".8" />
    <path d="M1028 264v6L828 384v-5z" fill="#4a453c" stroke="#262624" strokeWidth=".8" />
    <path d="M828 149.500 1027.500 264 828 379.500 629 264z" fill="url(#plate)" stroke="#262624" />
    <g fill="#7b7972" stroke="#262624" strokeWidth=".9">
      <path d="M824 200l5-2 28 17-5 3z" />
      <path d="M909 250l5-3 29 17-6 3z" />
      <path d="M714 264l6-3 28 17-6 3z" />
      <path d="M800 313l5-3 28 17-5 3z" />
    </g>
    <path d="M824 200l5-2 1 4zM909 250l5-3 1 5zM800 313l5-3 1 5z" fill="#3d3b36" />

    {/* rotation and offset manipulators */}
    <path d="M762 306c11-35 33-61 57-68 22-9 44-9 56 2" fill="none" stroke="url(#arc)" strokeWidth="5.5" />
    <path d="M769 292c12-27 28-47 50-54 17-7 34-8 46-3" fill="none" stroke="#55534e" strokeWidth="1.2" />
    <ellipse cx="819" cy="239" rx="8" ry="11" transform="rotate(24 819 239)" fill="#fff" />
    <ellipse
      cx="819"
      cy="239"
      rx="5.5"
      ry="9"
      transform="rotate(24 819 239)"
      fill="#0a9bf0"
      stroke="#16425e"
      strokeWidth="1.5"
    />
    <ellipse cx="819" cy="239" rx="1.3" ry="2.3" transform="rotate(24 819 239)" fill="none" stroke="#0d3a58" />
    <g fill="none" strokeLinecap="square">
      <g stroke="#44443f" strokeWidth="6">
        <path d="M819 283v-17M812 272l7-7 7 7" />
        <path d="M788 337l-13 8M776 337l-2 8 9 3" />
        <path d="M851 336l13 9M864 336l1 9-9 2" />
      </g>
      <g stroke="#f0f1f4" strokeWidth="3.5">
        <path d="M819 283v-17M812 272l7-7 7 7" />
        <path d="M788 337l-13 8M776 337l-2 8 9 3" />
        <path d="M851 336l13 9M864 336l1 9-9 2" />
      </g>
    </g>
    <JointGlyph x={808} y={311} />
    <path d="M831 312h9v13h-9z" fill="#8b8a84" opacity=".5" />
    <JointGlyph x={931} y={378} opacity={0.25} />
    <JointGlyph x={817} y={444} opacity={0.25} />
  </Scene>
);

const Browse = () => (
  <Browser>
    <Bar>
      <svg width="10" height="7" viewBox="0 0 10 7">
        <path d="M5 0v7L0 3.5zM10 0v7L5 3.5z" fill="currentColor" />
      </svg>
      <span>NAVEGADOR</span>
      <FaMinusCircle size={9} />
      <Grip />
    </Bar>
    <Tree>
      <TreeRow $root>
        <Expanded />
        <TreeCell>
          <Slot>
            <FaEye size={14} />
          </Slot>
          <RootName>
            <Assembly />
            emsamblaje v1
          </RootName>
          <svg width="13" height="13" viewBox="0 0 13 13">
            <circle cx="6.5" cy="6.5" r="5.5" fill="#fff" stroke="#333" />
            <circle cx="6.5" cy="6.5" r="2.2" fill="#222" />
          </svg>
        </TreeCell>
      </TreeRow>
      {NODES.map(({ name, icons }) => (
        <TreeRow key={name}>
          <Expand />
          <TreeCell>
            {icons.map((icon) => (
              <Slot key={icon} $dark={icon === "link"}>
                {NODE_ICONS[icon]}
              </Slot>
            ))}
            <NodeName>{name}</NodeName>
          </TreeCell>
        </TreeRow>
      ))}
    </Tree>
  </Browser>
);

const App = () => {
  return (
    <Shell>
      <GlobalStyle />
      <TitleBar>
        <svg width="14" height="16" viewBox="0 0 14 16">
          <path d="M0 1h10l4 3v11H0z" fill="#fbd9bd" />
          <path d="M10 1l4 3v11l-4-2z" fill="#f5b98a" />
          <text x="3" y="12" fontFamily="Liberation Sans" fontSize="12" fontWeight="bold" fill="#b1591a">
            F
          </text>
        </svg>
        <AppTitle>Autodesk Fusion 360 (Licencia educativa)</AppTitle>
        <WindowButtons>
          <button aria-label="Minimizar">
            <svg width="12" height="12" viewBox="0 0 12 12">
              <path d="M1 6.5h10" stroke="#000" />
            </svg>
          </button>
          <button aria-label="Restaurar">
            <svg width="12" height="12" viewBox="0 0 12 12">
              <path d="M1.5 3.5h7v7h-7zM3.5 3.5v-2h7v7h-2" fill="none" stroke="#000" />
            </svg>
          </button>
          <button aria-label="Cerrar ventana">
            <svg width="12" height="12" viewBox="0 0 12 12">
              <path d="M1.5 1.5l9 9M10.5 1.5l-9 9" stroke="#000" />
            </svg>
          </button>
        </WindowButtons>
      </TitleBar>
      <Main>
        <DataPanel />
        <Workspace>
          <TabStrip>
            <QuickBar>
              <QuickButton $gap={17} aria-label="Panel de datos">
                <Apps />
              </QuickButton>
              <QuickButton $gap={17} aria-label="Archivo">
                <FaFile size={14} />
                <Caret />
              </QuickButton>
              <QuickButton $gap={17} aria-label="Guardar">
                <Save />
              </QuickButton>
              <QuickButton $gap={12} aria-label="Deshacer">
                <Undo />
                <Caret />
              </QuickButton>
              <QuickButton $gap={0} disabled aria-label="Rehacer">
                <Undo flip />
                <Caret />
              </QuickButton>
            </QuickBar>
            <DocTab>
              <span>
                <Cube />
                emsamblaje v1*
              </span>
              <button aria-label="Cerrar documento">
                <FiX size={13} />
              </button>
            </DocTab>
            <NewTab aria-label="Nuevo diseño">
              <svg width="12" height="12" viewBox="0 0 12 12">
                <path d="M6 0v12M0 6h12" stroke="currentColor" strokeWidth="2.5" />
              </svg>
            </NewTab>
            <StripIcons>
              <JobStatus />
              <Clock />
              <FaBell size={16} />
              <FaQuestionCircle size={16} />
              <Avatar>AR</Avatar>
            </StripIcons>
          </TabStrip>
          <Ribbon>
            <WorkspaceButton>
              DISEÑO
              <Caret />
            </WorkspaceButton>
            <div>
              <RibbonTabs>
                <RibbonTab $active>SOLIDO</RibbonTab>
                <RibbonTab>SUPERFICIE</RibbonTab>
                <RibbonTab>MALLA</RibbonTab>
                <RibbonTab>CHAPA</RibbonTab>
                <RibbonTab>HERRAMIENTAS</RibbonTab>
              </RibbonTabs>
              <ToolGroups>
                {RIBBON.map(({ label, width, icons, active }) => (
                  <ToolGroup key={label} $width={width}>
                    <Tools>
                      {icons.map((Icon, i) => (
                        <button key={i} aria-label={`${label} ${i + 1}`}>
                          <Icon />
                        </button>
                      ))}
                      {active && (
                        <ActiveTool aria-label="Unión">
                          <JointIcon />
                        </ActiveTool>
                      )}
                    </Tools>
                    <GroupLabel>
                      {label}
                      <Caret />
                    </GroupLabel>
                  </ToolGroup>
                ))}
              </ToolGroups>
            </div>
          </Ribbon>
          <Canvas>
            <Model />
            <Browse />
            <ViewCube width="66" height="76" viewBox="1204 142 66 76">
              <ellipse cx="1236" cy="196" rx="26" ry="10" fill="#ddd" opacity=".6" />
              <path d="M1211 159l24-11 25 11-25 15z" fill="#f4f4f4" stroke="#777" strokeWidth=".8" />
              <path d="M1211 159l24 15v29l-22-15z" fill="#ececec" stroke="#777" strokeWidth=".8" />
              <path d="M1260 159l-25 15v29l22-15z" fill="#e2e2e2" stroke="#777" strokeWidth=".8" />
              <path d="M1209 153l3 35" stroke="#7575ef" strokeWidth="1.5" />
              <path d="M1212 188l28 19" stroke="#f07878" strokeWidth="1.5" />
              <g fontFamily="Roboto" fontSize="5" fill="#666" textAnchor="middle">
                <text transform="translate(1223 183) rotate(33)">FRONTAL</text>
                <text transform="translate(1247 185) rotate(-33)">DERECHA</text>
                <text transform="translate(1235 162) rotate(26)">SUPERIOR</text>
              </g>
              <g fontFamily="Liberation Sans" fontSize="10">
                <text x="1205" y="153" fill="#7b7bf5">
                  Z
                </text>
                <text x="1239" y="213" fill="#f58080">
                  X
                </text>
              </g>
            </ViewCube>
            <MiniToolbar>
              <DotGrip />
              <button aria-label="Tipo de alineación">
                <svg width="12" height="10" viewBox="0 0 12 10">
                  <path d="M.5.5h11v9H.5z" fill="#fff" stroke="#777" />
                  <path d="M1 5h2v2h2V5h2v2h2V5h2v4H1z" fill="#168de2" />
                </svg>
                <Caret />
              </button>
              <input aria-label="Ángulo de la unión" defaultValue="-90.0 deg" />
              <svg width="3" height="12" viewBox="0 0 3 12">
                <path d="M0 0h3v3H0zM0 4.5h3v3H0zM0 9h3v3H0z" fill="#888" />
              </svg>
            </MiniToolbar>
            <Tooltip>Ajustar la alineación y el movimiento de la unión</Tooltip>
            <BottomRow>
              <Bar>
                <svg width="10" height="7" />
                <span>COMENTARIOS</span>
                <FaPlusCircle size={9} />
                <Grip />
              </Bar>
              <NavBar>
                <button aria-label="Orbitar">
                  <Orbit />
                  <Caret />
                </button>
                <button aria-label="Mirar a">
                  <LookAt />
                </button>
                <button aria-label="Encuadre">
                  <Pan />
                </button>
                <button aria-label="Zoom">
                  <Zoom />
                </button>
                <button aria-label="Ajustar">
                  <Zoom box />
                  <Caret />
                </button>
                <button aria-label="Visualización">
                  <Display />
                  <Caret />
                </button>
                <button aria-label="Rejilla">
                  <GridIcon />
                  <Caret />
                </button>
                <button aria-label="Ventanas">
                  <Viewports />
                  <Caret />
                </button>
              </NavBar>
            </BottomRow>
          </Canvas>
          <Timeline>
            <Playback>
              {PLAYBACK.map(([name, d]) => (
                <button key={name} aria-label={name}>
                  <svg width="16" height="16" viewBox="0 0 16 16">
                    <path d={d} fill="currentColor" />
                  </svg>
                </button>
              ))}
            </Playback>
            <Steps>
              {STEPS.map((kind, i) => (
                <Step key={i} aria-label={`Operación ${i + 1}`}>
                  {kind === "link" ? <LinkStep /> : <JointStep />}
                  <StepTick
                    $edge={i === 0 ? "first" : i === STEPS.length - 1 ? "last" : undefined}
                  />
                </Step>
              ))}
            </Steps>
            <Marker width="12" height="32" viewBox="0 0 12 32">
              <path d="M0 1h12v5L7 10v21H5V10L0 6z" fill="#555" />
            </Marker>
            <Settings aria-label="Ajustes">
              <FaCog size={15} />
            </Settings>
          </Timeline>
        </Workspace>
      </Main>
    </Shell>
  );
};

export default App;
